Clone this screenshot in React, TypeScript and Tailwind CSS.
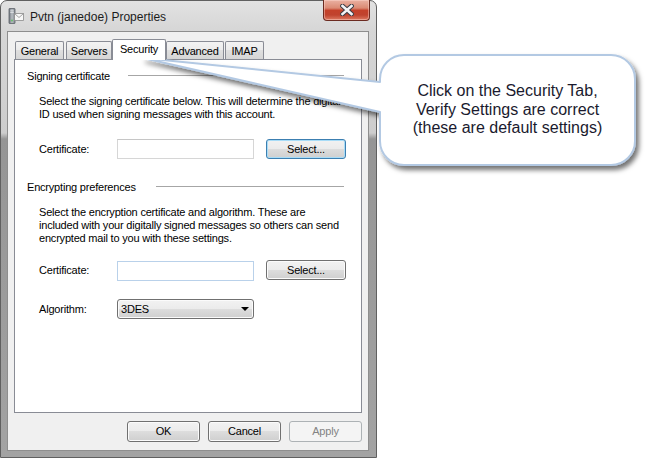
import React from "react";

const FONT = { fontFamily: '"Liberation Sans", Arial, sans-serif' };

function PushButton({ label, variant }: { label: string; variant: "normal" | "focus" | "disabled" }) {
  let cls =
    "h-[21px] w-[73px] rounded-[3px] border flex items-center justify-center text-[11px] tracking-[-0.2px] ";
  if (variant === "normal") {
    cls +=
      "border-[#707070] text-black bg-[linear-gradient(180deg,#f2f2f2_0%,#ebebeb_50%,#dddddd_50%,#cfcfcf_100%)] shadow-[inset_0_0_0_1px_#fbfbfb]";
  } else if (variant === "focus") {
    cls +=
      "border-[#3c7fb1] text-black bg-[linear-gradient(180deg,#f2f2f2_0%,#ebebeb_50%,#dddddd_50%,#cfcfcf_100%)] shadow-[inset_0_0_0_1px_#a8dcf7]";
  } else {
    cls += "border-[#adb2b5] text-[#838383] bg-[#f4f4f4]";
  }
  return <div className={cls}>{label}</div>;
}

function SelectButton({ focus }: { focus?: boolean }) {
  return (
    <div
      className={
        focus
          ? "ml-[12px] h-[20px] w-[80px] rounded-[3px] border border-[#3c7fb1] flex items-center justify-center text-[11px] tracking-[-0.2px] bg-[linear-gradient(180deg,#f2f2f2_0%,#ebebeb_50%,#dddddd_50%,#cfcfcf_100%)] shadow-[inset_0_0_0_1px_#a8dcf7]"
          : "ml-[12px] h-[20px] w-[80px] rounded-[3px] border border-[#707070] flex items-center justify-center text-[11px] tracking-[-0.2px] bg-[linear-gradient(180deg,#f2f2f2_0%,#ebebeb_50%,#dddddd_50%,#cfcfcf_100%)] shadow-[inset_0_0_0_1px_#fbfbfb]"
      }
    >
      Select...
    </div>
  );
}

function Tab({ label, selected, cls }: { label: string; selected?: boolean; cls: string }) {
  if (selected) {
    return (
      <div
        className={
          "relative z-10 -mb-px h-[21px] border border-b-0 border-[#898c95] bg-white rounded-t-[2px] flex items-center justify-center text-[11px] tracking-[-0.2px] pb-[1px] " +
          cls
        }
      >
        {label}
      </div>
    );
  }
  return (
    <div
      className={
        "h-[18px] border border-b-0 border-[#898c95] rounded-t-[2px] bg-[linear-gradient(180deg,#f3f3f3_0%,#ebebeb_50%,#dfdfdf_50%,#d6d6d6_100%)] flex items-center justify-center text-[11px] tracking-[-0.2px] pt-[1px] " +
        cls
      }
    >
      {label}
    </div>
  );
}

function AppIcon() {
  return (
    <svg width="16" height="16" viewBox="0 0 16 16">
      <defs>
        <linearGradient id="tw" x1="0" x2="1" y1="0" y2="0">
          <stop offset="0" stopColor="#6f757c" />
          <stop offset="0.5" stopColor="#b9bec4" />
          <stop offset="1" stopColor="#80868c" />
        </linearGradient>
      </defs>
      <rect x="1" y="0.5" width="6" height="15" rx="0.5" fill="url(#tw)" stroke="#5c6167" strokeWidth="0.8" />
      <rect x="2.2" y="2.5" width="3.6" height="0.8" fill="#e5e7ea" />
      <rect x="2.2" y="4.2" width="3.6" height="0.8" fill="#e5e7ea" />
      <circle cx="4" cy="12.5" r="0.9" fill="#5fc35f" />
      <rect x="6.5" y="5.5" width="9" height="7" fill="#f7f7f7" stroke="#8c8c8c" strokeWidth="0.8" />
      <path d="M6.8 5.8 L11 9.5 L15.2 5.8" fill="none" stroke="#8c8c8c" strokeWidth="0.8" />
    </svg>
  );
}

function CloseGlyph() {
  return (
    <svg width="14" height="12" viewBox="0 0 14 12">
      <path d="M2.5 2 L11.5 10 M11.5 2 L2.5 10" stroke="#3c3c44" strokeWidth="4.6" strokeLinecap="square" />
      <path d="M2.5 2 L11.5 10 M11.5 2 L2.5 10" stroke="#f4f4f6" strokeWidth="2.6" strokeLinecap="square" />
    </svg>
  );
}

export default function App() {
  return (
    <div className="relative w-[669px] h-[460px] overflow-hidden bg-white text-black" style={FONT}>
      {/* Window */}
      <div className="flex">
        <div className="w-[377px] h-[458px] border border-[#606060] rounded-t-[7px] flex flex-col bg-[linear-gradient(180deg,#e2e2e2_0px,#d6d6d6_30px,#cdcdcd_132px,#959595_138px,#a3a3a3_100%)]">
          {/* Title bar */}
          <div className="h-[30px] flex items-start shrink-0">
            <div className="mt-[7px] ml-[7px]">
              <AppIcon />
            </div>
            <div className="ml-[6px] mt-[8px] text-[12px] leading-[16px] text-[#1c1c1c]">Pvtn (janedoe) Properties</div>
            <div className="ml-auto mr-[6px] -mt-px h-[21px] w-[47px] rounded-b-[4px] border border-t-0 border-[#6b2a20] bg-[linear-gradient(180deg,#eab1a2_0%,#db8a74_40%,#c4412a_52%,#c0432e_75%,#dd7a62_100%)] shadow-[inset_0_0_0_1px_rgba(255,220,210,0.45)] flex items-center justify-center">
              <CloseGlyph />
            </div>
          </div>
          {/* Client area */}
          <div className="ml-[6px] mr-[7px] h-[420px] border border-[#8e8e8e] bg-[#f0f0f0] pt-[7px] px-[6px] pb-[8px] flex flex-col">
            {/* Tabs */}
            <div className="h-[20px] flex items-end">
              <Tab label="General" cls="ml-[1px] w-[49px]" />
              <Tab label="Servers" cls="ml-[2px] w-[46px]" />
              <Tab label="Security" selected cls="w-[54px]" />
              <Tab label="Advanced" cls="w-[58px]" />
              <Tab label="IMAP" cls="ml-[1px] w-[39px]" />
            </div>
            {/* Panel */}
            <div className="h-[354px] border border-[#898c95] bg-white flex flex-col text-[11px] leading-[13px] tracking-[-0.2px]">
              {/* Signing certificate heading */}
              <div className="mt-[10px] pl-[12px] pr-[17px] flex items-center">
                <div className="w-[101px] shrink-0 whitespace-nowrap">Signing certificate</div>
                <div className="flex-1 h-px bg-[#a6a6a6] -translate-y-px" />
              </div>
              <div className="mt-[12px] pl-[24px] whitespace-nowrap">
                Select the signing certificate below. This will determine the digital
                <br />
                ID used when signing messages with this account.
              </div>
              <div className="mt-[18px] pl-[24px] flex items-center h-[20px]">
                <div className="w-[78px] shrink-0">Certificate:</div>
                <div className="w-[137px] h-[20px] border border-[#d6d6d6] border-t-[#c6c6c6] bg-white" />
                <SelectButton focus />
              </div>
              {/* Encrypting preferences heading */}
              <div className="mt-[22px] pl-[12px] pr-[17px] flex items-center">
                <div className="w-[129px] shrink-0 whitespace-nowrap">Encrypting preferences</div>
                <div className="flex-1 h-px bg-[#a6a6a6] -translate-y-px" />
              </div>
              <div className="mt-[12px] pl-[24px] whitespace-nowrap">
                Select the encryption certificate and algorithm. These are
                <br />
                included with your digitally signed messages so others can send
                <br />
                encrypted mail to you with these settings.
              </div>
              <div className="mt-[15px] pl-[24px] flex items-center h-[20px]">
                <div className="w-[78px] shrink-0 pt-[1px]">Certificate:</div>
                <div className="w-[137px] h-[20px] mt-[1px] border border-[#b9d1ea] bg-white" />
                <SelectButton />
              </div>
              <div className="mt-[19px] pl-[24px] flex items-center h-[20px]">
                <div className="w-[78px] shrink-0">Algorithm:</div>
                <div className="w-[137px] h-[20px] rounded-[3px] border border-[#707070] bg-[linear-gradient(180deg,#f2f2f2_0%,#ebebeb_50%,#dddddd_50%,#cfcfcf_100%)] shadow-[inset_0_0_0_1px_#fbfbfb] flex items-center pl-[3px] pr-[4px]">
                  <span>3DES</span>
                  <svg className="ml-auto" width="8" height="4" viewBox="0 0 8 4">
                    <path d="M0 0 L8 0 L4 4 Z" fill="#000" />
                  </svg>
                </div>
              </div>
            </div>
            {/* Bottom buttons */}
            <div className="mt-[8px] flex justify-end gap-[8px]">
              <PushButton label="OK" variant="normal" />
              <PushButton label="Cancel" variant="normal" />
              <PushButton label="Apply" variant="disabled" />
            </div>
          </div>
        </div>
      </div>

      {/* Callout overlay */}
      <svg className="absolute left-0 top-0 pointer-events-none" width="669" height="460" viewBox="0 0 669 460">
        <defs>
          <filter id="sh" x="-10%" y="-30%" width="130%" height="170%">
            <feDropShadow dx="3" dy="4" stdDeviation="2.5" floodColor="#000" floodOpacity="0.55" />
          </filter>
        </defs>
        <path
          d="M404 55 L611 55 A24 24 0 0 1 635 79 L635 141 A24 24 0 0 1 611 165 L404 165 A24 24 0 0 1 380 141 L380 112 L143 58 L380 82 L380 79 A24 24 0 0 1 404 55 Z"
          fill="#ffffff"
          stroke="#b3c9e3"
          strokeWidth="2"
          strokeLinejoin="round"
          filter="url(#sh)"
        />
      </svg>
      <div className="absolute left-[380px] top-[55px] w-[255px] h-[110px] flex items-center justify-center text-center text-[16px] leading-[18.4px] text-[#1a1a2e]">
        <div>
          Click on the Security Tab,
          <br />
          Verify Settings are correct
          <br />
          (these are default settings)
        </div>
      </div>
    </div>
  );
}
